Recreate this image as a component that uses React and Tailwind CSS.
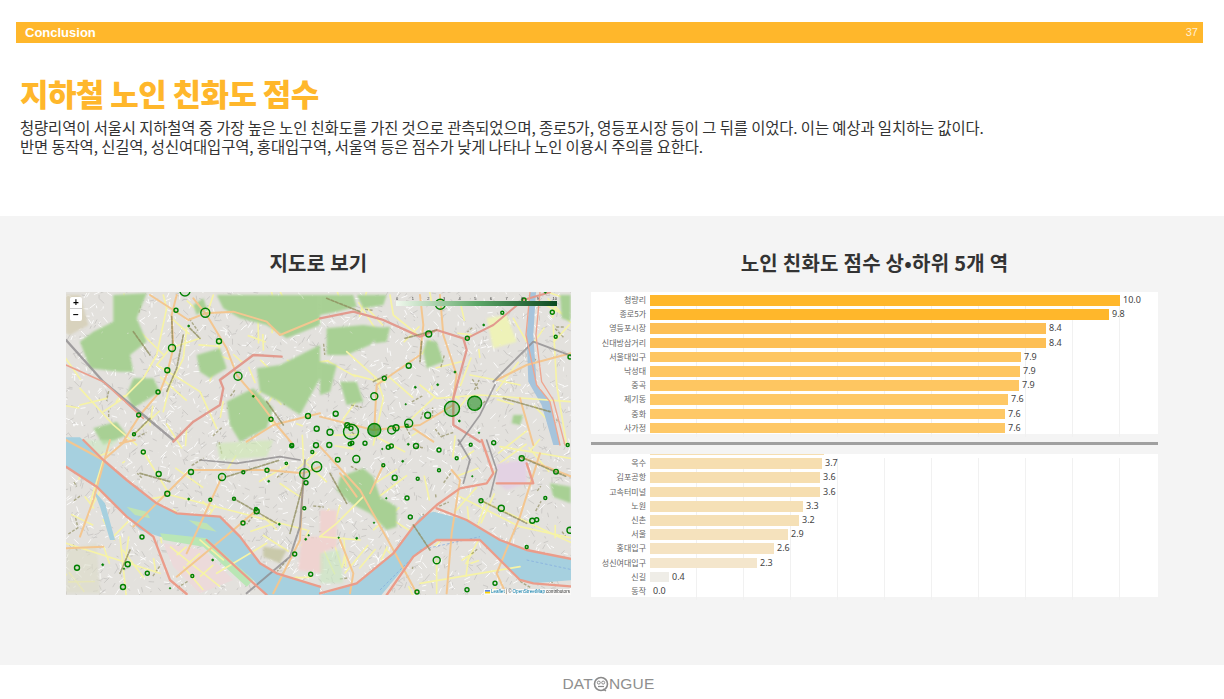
import { Fragment } from 'react';

const top10 = [
  ['청량리', 470, '10.0', '#ffb72b'],
  ['종로5가', 459, '9.8', '#ffb72b'],
  ['영등포시장', 396, '8.4', '#fdbf55'],
  ['신대방삼거리', 396, '8.4', '#fdbf55'],
  ['서울대입구', 371, '7.9', '#fec661'],
  ['낙성대', 370, '7.9', '#fec661'],
  ['중곡', 369, '7.9', '#fec661'],
  ['제기동', 358, '7.6', '#fec866'],
  ['중화', 355, '7.6', '#fec866'],
  ['사가정', 355, '7.6', '#fec866'],
];

const bottom10 = [
  ['옥수', 172, '3.7', '#f6deb0'],
  ['김포공항', 170, '3.6', '#f6deb0'],
  ['고속터미널', 170, '3.6', '#f6deb0'],
  ['노원', 153, '3.3', '#f5e0b6'],
  ['신촌', 149, '3.2', '#f5e0b6'],
  ['서울', 138, '2.9', '#f5e2bd'],
  ['홍대입구', 124, '2.6', '#f5e3c2'],
  ['성신여대입구', 107, '2.3', '#f4e6cc'],
  ['신길', 19, '0.4', '#efede7'],
  ['동작', 0, '0.0', '#ffffff'],
];

// [x, y, r, fillOpacity]
const markers = [
  [119,-1,5],[110,18.3,2],[139.3,20.7,4.5],[122.7,34,1,1],[153,49.3,2.5],[106,56,3.5],[101.3,78.3,2.5],[92,100,2],
  [72.7,123,2],[68,142.3,1.5],[172,84.3,4],[187.3,104.3,1,1],[205,127.3,2],[242,124,2.5],[250.7,136.7,2.5],[226,153,1.5],
  [374.3,12.3,5],[458,8,2],[436.3,20.7,1.5],[417.7,33,1,1],[486.3,20.3,2],[479.3,0.3,1,1],[362.7,42,3],[401.3,46.3,2],
  [489.7,44.7,1.5],[504,65,2],[342.7,73.7,2.5],[318.3,86.3,2],[389,80,1,1],[371.7,92.7,1,1],[349.3,95.3,1,1],[308.3,104.3,3.5],
  [269.7,121.7,2.5],[386,116.7,7.5,0.25],[408.7,111.3,7,0.5],[361.7,123.3,3],[342.7,131.3,4],[340.7,133.7,1.5],[393.3,129,1,1],
  [264,140.3,3],[285,139.7,7.5],[281.3,133.3,2.5],[285,136.3,2],[308.3,138,6.5,0.55],[325.7,138,4],[330,135.7,3],[339.7,112.3,0.7,1],[413,140.7,0.7,1],
  [77.3,160,2],[92.7,182,2.5],[125,180,2.5],[156,185,3.5],[177.3,180.3,1.5],[201,178.3,2],[202.7,189.3,1,1],[238.7,181.7,5],
  [240,190.7,2],[250.7,174.7,5],[225.7,153.7,2],[250,153.3,2.5],[246.3,160,1.5],[220.3,171.3,1.2],[101.3,201.7,2.5],[122.7,207,1,1],
  [144.3,207.7,1.5],[168,206.7,1.5],[190,217,1.5],[190.7,219.3,2.5],[213.3,232.3,1,1],[177,231,2],[238.3,216.3,1.5],[242.7,243.3,0.7,1],
  [239.7,247.3,1,1],[228.7,262,2],[244.7,282.3,2],[76,245,2],[36.7,272.7,1,1],[61.7,272.3,2.5],[58,276.7,0.7,1],[81.3,281.3,2],
  [11,275.7,2.5],[57,295,2.5],[126.3,284,1.5],[146.7,268,1,1],[104,296.3,0.7,1],
  [263.3,153,2.5],[284,152,1.8],[286,151,1.8],[299,151.3,2],[350,154,2.5],[373,158,2],[404.7,152.7,1.5],[427.7,150.7,2],[501.7,153,1.5],
  [325.3,154,2],[322.3,155.3,2],[316.3,157,0.7,1],[342.3,152.3,1,1],[271.7,167.7,2.3],[290.3,167,3.5],[317.3,173.3,1.5],[336.7,169.3,1,1],
  [373,178.3,1.5],[390.7,166.3,1.5],[455.7,166.3,2.5],[490,179.7,2.3],[328.7,185.7,2.5],[351.7,186.7,1.5],[406.3,184.3,0.7,1],[341,206,2],
  [320.3,206.3,0.7,1],[415,208.7,2],[479.3,206,1.5],[435.3,216.3,3],[344.3,225,2],[466.3,228.7,2.5],[470.7,227.7,2],[504,238.3,3],
  [308,230.7,0.7,1],[290.7,246.3,1,1],[272.7,245.7,0.7,1],[460.7,255,1.5],[370.7,268.3,3.5],[429,291.3,2],[401,297.7,2],[351,300,2],
];

// left half above the river, coordinates are 3x
const parksA = [
  'M160 30L260 25 230 100 260 170 210 210 220 260 180 260 90 250 60 170 100 140 160 110Z',
  'M470 30L780 30 780 120 680 160 620 120 540 100 490 70Z',
  'M410 210L480 190 500 250 450 280 420 260Z',
  'M500 350L580 310 640 370 620 430 540 470 510 420Z',
  'M590 250L660 240 780 180 780 280 720 390 660 350 600 320Z',
  'M220 280L280 280 300 320 220 370 200 330Z',
  'M100 430L170 410 200 450 130 480Z',
  'M400 60L430 40 440 70 410 90Z',
];
const parksB = [
  'M0 30L100 30 110 65 50 80 0 90Z',
  'M20 130L130 120 200 130 150 180 80 210 20 210Z',
  'M320 165L350 170 370 230 320 250 310 200Z',
  'M60 290L110 290 130 350 80 360Z',
  'M720 30L752 30 752 110 725 100Z',
  'M0 230L50 240 30 320 0 330Z',
  'M580 390L610 390 600 420 575 415Z',
  'M110 30L200 30 190 60 130 70Z',
  'M160 130L210 125 200 170 165 175Z',
];

function seeded(n, seed, span) {
  // small fixed generator so the street texture does not change between loads
  let s = seed;
  const next = () => {
    s = (s * 16807) % 2147483647;
    return s / 2147483647;
  };
  return Array.from({ length: n }, () => [next() * 505, next() * 303, next() * span - span / 2, next() * span - span / 2, next()]);
}

const streets = seeded(3200, 91, 12);
const parkFlecks = seeded(260, 17, 6);
const yellowRoads = seeded(150, 4711, 60);
const olive = seeded(70, 2027, 24);

function SeoulMap() {
  return (
    <svg viewBox="0 0 505 303" className="block w-[505px] h-[303px]">
      <defs>
        <filter id="soft"><feGaussianBlur stdDeviation="0.4" /></filter>
        <filter id="softer"><feGaussianBlur stdDeviation="1" /></filter>
      </defs>
      <rect width="505" height="303" fill="#e3e1dd" />
      <g filter="url(#soft)">
        {streets.map(([x, y, dx, dy, k], i) => (
          <path key={i} d={`M${x} ${y}l${dx} ${dy}`} stroke={k > 0.5 ? '#c9c7c4' : '#ffffff'} strokeWidth={1} opacity={0.85} />
        ))}
        {yellowRoads.map(([x, y, dx, dy], i) => (
          <path key={i} d={`M${x} ${y}l${dx} ${dy}`} stroke="#f6f3a6" strokeWidth={1.6} />
        ))}
        {olive.map(([x, y, dx, dy], i) => (
          <path key={i} d={`M${x} ${y}l${dx} ${dy}`} stroke="#8d8a5a" strokeWidth={1.4} strokeDasharray="3 1.5" opacity={0.65} />
        ))}

        <g filter="url(#softer)">
          {/* north half */}
          <g transform="translate(-6 -7) scale(.3333)">
            <path d="M18 30L60 30 85 120 30 150 18 145Z" fill="#d8d2bd" />
            {parksA.map((d, i) => <path key={i} d={d} fill="#a8d094" />)}
          </g>
          <g transform="translate(254 -7) scale(.3333)">
            {parksB.map((d, i) => <path key={i} d={d} fill="#a8d094" />)}
            <path d="M500 100L560 90 590 170 520 190Z" fill="#eef2b8" />
          </g>
          {/* south half */}
          <g transform="translate(-6 148) scale(.3333)">
            <path d="M0 0L180 0 100 60 20 60Z" fill="#c8ecc0" opacity=".5" />
            <path d="M470 10L640 0 620 50 480 60Z" fill="#cdeab0" opacity=".6" />
            <path d="M610 320L680 330 660 370 610 350Z" fill="#c9c9aa" />
            <path d="M725 290L790 290 790 400 715 390Z" fill="#efd3d0" />
            <path d="M20 330L110 310 120 460 18 460Z" fill="#dcdcc8" opacity=".6" />
          </g>
          <g transform="translate(254 148) scale(.3333)">
            <path d="M60 110L130 85 160 110 180 170 230 200 230 260 200 270 150 220 90 190 50 150Z" fill="#a8d094" />
            <path d="M690 130L752 140 752 190 700 170Z" fill="#a8d094" />
            <path d="M0 210L50 210 50 320 0 340Z" fill="#efd3d0" />
            <path d="M530 70L620 60 620 130 560 150 530 130Z" fill="#e3d2e3" />
            <path d="M0 340L60 330 70 430 0 430Z" fill="#c8e8c0" opacity=".6" />
          </g>
        </g>
        {parkFlecks.map(([x, y, dx, dy], i) => (
          <path key={i} d={`M${x} ${y}l${dx} ${dy}`} stroke="#ecebe6" strokeWidth={1} opacity={0.5} />
        ))}

        {/* river */}
        <g transform="translate(-6 148) scale(.3333)">
          <path
            d="M18 85L18 -8 60 -8 130 60 200 120 290 190 350 220 480 230 540 290 600 370 650 400 780 440 780 470 620 465 580 420 440 300 300 290 240 270 110 140Z"
            fill="#a6d0df"
          />
          <path d="M100 150L135 190 165 300 150 300 120 200Z" fill="#a6d0df" />
          <path d="M200 200L260 215 270 235 225 225Z" fill="#bfe3b4" />
          <path d="M385 240L440 250 470 275 420 265Z" fill="#bfe3b4" />
          <path d="M300 280L440 295 580 420 560 440 430 320 310 300Z" fill="#b9e6b5" />
          <path d="M310 310L430 330 520 420 420 460 340 380Z" fill="#ecdada" />
          <path d="M350 345L380 320M380 375L420 340M420 410L460 375M330 320L480 440M370 380L430 450" stroke="#f6f3a6" strokeWidth="5" />
        </g>
        <g transform="translate(254 148) scale(.3333)">
          <path
            d="M0 465L110 430 220 340 300 230 340 215 440 240 540 300 620 330 760 360 760 420 640 430 600 420 540 360 480 300 350 300 280 350 180 470Z"
            fill="#a6d0df"
          />
          <path d="M180 450L300 330 480 290M620 360L760 390" fill="none" stroke="#7fa8e0" strokeWidth="2" strokeDasharray="8 6" />
        </g>
        <g transform="translate(254 -7) scale(.3333)">
          <path d="M648 22L640 150 650 300 690 350 720 480 700 480 665 360 625 290 620 150 630 22Z" fill="#a6c4dc" />
        </g>

        {/* roads */}
        <g fill="none" strokeLinecap="round" strokeLinejoin="round">
          <g transform="translate(-6 -7) scale(.3333)" >
            <g stroke="#f6f3a6" strokeWidth="5">
              <path d="M310 30L320 70 290 210 250 280 190 340 130 380" />
              <path d="M420 160L330 190 290 240 340 270 420 320 470 430" />
              <path d="M60 310L160 420 230 480" />
              <path d="M380 130L370 220 330 300 310 380" />
              <path d="M140 340L60 360" />
              <path d="M460 30L440 90" />
            </g>
            <g stroke="#f3c690" strokeWidth="6">
              <path d="M270 30L340 75 385 105 436 85 520 80 620 110 660 150 780 100" />
              <path d="M350 30L335 90 340 190 320 270 300 320 240 390 190 470" />
              <path d="M400 40L440 90 500 190 530 270 590 340 650 420 700 480" />
              <path d="M560 470L640 420 780 385" />
            </g>
            <path d="M18 165L130 290 250 390 340 465" stroke="#8e8c8e" strokeWidth="7" opacity=".8" />
            <path d="M18 240L130 290 250 400" stroke="#eaa08f" strokeWidth="5" />
            <path d="M340 470L400 410 480 360 490 310 480 285 580 210 665 215" stroke="#e29a8e" strokeWidth="7" />
            <g stroke="#8d8a5a" strokeWidth="5" strokeDasharray="9 5" opacity=".75">
              <path d="M335 95L338 180" />
              <path d="M370 150L350 250 320 320" />
              <path d="M220 140L270 210" />
              <path d="M390 130L420 160" />
              <path d="M270 400L220 450" />
              <path d="M620 350L670 420" />
            </g>
          </g>
          <g transform="translate(254 -7) scale(.3333)">
            <g stroke="#f6f3a6" strokeWidth="5">
              <path d="M210 30L220 90 300 155" />
              <path d="M80 200L170 280 190 340 160 480" />
              <path d="M300 300L350 340 480 330 750 350" />
              <path d="M450 270L530 285 600 300" />
              <path d="M700 120L710 300 740 480" />
              <path d="M580 100L620 170" />
            </g>
            <g stroke="#f3c690" strokeWidth="6">
              <path d="M300 30L310 120 300 210 170 300 163 430" />
              <path d="M360 30L370 150 410 270 400 340" />
              <path d="M0 395L160 435 300 420 400 360" />
              <path d="M280 430L340 470" />
              <path d="M530 285L620 240 752 205" />
              <path d="M600 340L640 480" />
            </g>
            <path d="M520 290L640 170 752 212" stroke="#8e8c8e" strokeWidth="6" opacity=".8" />
            <path d="M0 100L100 80 190 105 300 155 350 135 430 160 440 195 400 340 400 420 480 470" stroke="#e29a8e" strokeWidth="7" />
            <path d="M440 160L520 120 610 45 690 22" stroke="#e29a8e" strokeWidth="6" />
            <path d="M630 22L618 150 650 300 690 350 720 480" stroke="#eea58f" strokeWidth="4" />
            <path d="M660 22L648 150 665 290 700 345 735 480" stroke="#eea58f" strokeWidth="4" />
            <path d="M415 480L480 390 525 300" stroke="#8e8c8e" strokeWidth="5" opacity=".8" />
            <g stroke="#8d8a5a" strokeWidth="5" strokeDasharray="9 5" opacity=".75">
              <path d="M305 170L300 230" />
              <path d="M20 40L120 80" />
              <path d="M550 340L690 380" />
              <path d="M160 290L200 270" />
              <path d="M255 160L350 135" />
            </g>
          </g>
          <g transform="translate(-6 148) scale(.3333)">
            <g stroke="#f6f3a6" strokeWidth="5">
              <path d="M250 36L330 165 390 180 740 270" />
              <path d="M130 60L90 190" />
              <path d="M18 310L300 400" />
              <path d="M180 290L200 480" />
              <path d="M420 300L490 360" />
              <path d="M470 400L620 310" />
            </g>
            <g stroke="#f3c690" strokeWidth="6">
              <path d="M150 0L100 180 60 290" />
              <path d="M400 90L620 90 730 100 780 80" />
              <path d="M180 10L225 0" />
              <path d="M390 90L320 160 220 260" />
              <path d="M486 110L440 210 380 340" />
              <path d="M730 100L720 300 640 460" />
              <path d="M18 0L130 60 200 0" />
              <path d="M18 325L130 320" />
              <path d="M590 210L520 270 350 410" />
            </g>
            <path d="M420 60L530 70 660 50 720 60" stroke="#8e8c8e" strokeWidth="5" opacity=".8" />
            <path d="M735 60L720 260 690 350 560 460" stroke="#8e8c8e" strokeWidth="6" opacity=".8" />
            <g stroke="#eb9c8a" strokeWidth="7">
              <path d="M18 80L110 140 200 230 280 290 330 420 380 462" />
              <path d="M70 0L130 60 200 120 290 190 350 220 480 230 540 290 600 370 650 400 780 440" />
              <path d="M440 300L570 420 620 465" />
            </g>
            <g stroke="#8d8a5a" strokeWidth="5" strokeDasharray="9 5" opacity=".75">
              <path d="M500 110L660 60" />
              <path d="M240 100L330 125" />
              <path d="M520 175L650 250" />
              <path d="M210 330L180 400" />
              <path d="M730 130L690 280" />
            </g>
          </g>
          <g transform="translate(254 148) scale(.3333)">
            <g stroke="#f6f3a6" strokeWidth="5">
              <path d="M480 180L780 320" />
              <path d="M350 360L350 460" />
              <path d="M130 170L50 250 0 290" />
              <path d="M540 20L780 60" />
              <path d="M0 290L120 300" />
              <path d="M420 170L600 260 780 300" />
              <path d="M300 430L600 380" />
            </g>
            <g stroke="#f3c690" strokeWidth="6">
              <path d="M0 20L120 150 220 330 290 460" />
              <path d="M60 100L110 170" />
              <path d="M395 90L420 120 395 280 380 460" />
              <path d="M660 40L600 230 530 400 560 465" />
              <path d="M600 50L780 120" />
              <path d="M60 300L100 400 90 460" />
              <path d="M190 75L150 160" />
            </g>
            <path d="M415 0L450 60 430 130" stroke="#8e8c8e" strokeWidth="5" opacity=".8" />
            <path d="M500 0L530 90 510 170" stroke="#8e8c8e" strokeWidth="5" opacity=".8" />
            <g stroke="#eb9c8a" strokeWidth="7">
              <path d="M485 0L520 100 500 130 420 145 350 195 280 260 220 340 110 430 0 460" />
              <path d="M350 205L440 240 540 300 620 330 770 360" />
              <path d="M200 465L280 350 350 300 480 300 540 360 600 420 640 430 760 440" />
              <path d="M530 130L640 130 620 70" />
            </g>
            <g stroke="#8d8a5a" strokeWidth="5" strokeDasharray="9 5" opacity=".75">
              <path d="M480 180L620 250" />
              <path d="M280 255L330 330" />
              <path d="M600 50L740 110" />
              <path d="M30 100L80 190" />
            </g>
          </g>
        </g>
      </g>

      {markers.map(([x, y, r, fill], i) => (
        <circle key={i} cx={x} cy={y} r={r} stroke="#008000" strokeWidth={r < 1.2 ? 0.7 : 1.4} fill="#008000" fillOpacity={fill || 0.05} />
      ))}
    </svg>
  );
}

function BarChart({ rows, sliver }) {
  return (
    <div className={`bg-white w-[567px] flex flex-col ${sliver ? 'h-[143px]' : 'h-[142px] pt-[3px]'}`}>
      {sliver && (
        <div className="flex h-[4.3px] shrink-0">
          <div className="w-[59px]" />
          <div className="h-[1px] w-[174px] bg-[#f6deb0]" />
        </div>
      )}
      {rows.map(([name, width, value, color]) => (
        <Fragment key={name}>
          <div className="flex h-[14.2px] shrink-0 items-start">
            <div className="w-[59px] pr-[4px] text-right text-[8px] leading-[10.7px] text-[#666] font-['Noto_Sans_CJK_KR',sans-serif]">{name}</div>
            <div className="flex-1 h-[14.2px] flex items-start bg-[repeating-linear-gradient(to_right,transparent_0,transparent_46px,#f1f1f1_46px,#f1f1f1_47px)]">
              <div className="h-[10.7px]" style={{ width, backgroundColor: color }} />
              <span className="ml-[3px] text-[9px] leading-[10.7px] text-[#444] font-['Noto_Sans',sans-serif]">{value}</span>
            </div>
          </div>
        </Fragment>
      ))}
    </div>
  );
}

export default function App() {
  return (
    <div className="w-[1224px] h-[699px] overflow-hidden bg-white font-['Noto_Sans_CJK_KR',sans-serif] flex flex-col">
      <div className="h-[216px] shrink-0 pt-[22px]">
        <div className="ml-[16px] mr-[21px] h-[21px] bg-[#ffb72b] pl-[9px] pr-[5px] flex items-center justify-between text-white font-['Liberation_Sans',sans-serif]">
          <span className="text-[13px] font-bold">Conclusion</span>
          <span className="text-[11px] opacity-80">37</span>
        </div>
        <h1 className="mt-[32px] ml-[20px] text-[31px] leading-[36px] font-black text-[#ffb72b] tracking-[-0.6px]">지하철 노인 친화도 점수</h1>
        <div className="ml-[20px] mt-[7px] text-[15.4px] leading-[19px] text-[#333] tracking-[-0.1px]">
          <p>청량리역이 서울시 지하철역 중 가장 높은 노인 친화도를 가진 것으로 관측되었으며, 종로5가, 영등포시장 등이 그 뒤를 이었다. 이는 예상과 일치하는 값이다.</p>
          <p>반면 동작역, 신길역, 성신여대입구역, 홍대입구역, 서울역 등은 점수가 낮게 나타나 노인 이용시 주의를 요한다.</p>
        </div>
      </div>

      <div className="h-[449px] shrink-0 bg-[#f4f4f4] pl-[66px] pt-[31px] flex gap-[20px]">
        <div className="w-[505px]">
          <h2 className="h-[45px] text-center text-[20px] leading-[32px] font-bold text-[#333] tracking-[0.25px]">지도로 보기</h2>
          <div className="relative w-[505px] h-[303px] overflow-hidden">
            <SeoulMap />
            <div className="absolute left-[4px] top-[5px] w-[12px] h-[24px] bg-white rounded-[2px] flex flex-col text-center font-['Liberation_Sans',sans-serif] font-bold text-[10px] leading-[12px] text-black">
              <span className="h-[12px] border-b border-[#ccc]">+</span>
              <span className="h-[12px]">−</span>
            </div>
            <div className="absolute left-[330px] top-[4px] w-[161px]">
              <div className="flex justify-between text-[4px] leading-[5px] text-[#333] font-['Liberation_Sans',sans-serif]">
                {[0, 1, 2, 3, 4, 5, 6, 7, 8, 9, 10].map((n) => <span key={n}>{n}</span>)}
              </div>
              <div className="h-[5px] bg-gradient-to-r from-[#f2f9ef] via-[#5da868] to-[#0c4a22]" />
            </div>
            <div className="absolute right-0 bottom-0 h-[6px] px-[1px] bg-white/80 text-[4.6px] leading-[6px] text-[#333] font-['Liberation_Sans',sans-serif] whitespace-nowrap flex items-center gap-[1px]">
              <svg viewBox="0 0 6 4" className="w-[5px] h-[3.5px]"><rect width="6" height="2" fill="#4c7be1" /><rect y="2" width="6" height="2" fill="#ffd500" /></svg>
              <span className="text-[#0078a8]">Leaflet</span> | © <span className="text-[#0078a8]">OpenStreetMap</span> contributors
            </div>
          </div>
        </div>
        <div className="w-[567px]">
          <h2 className="h-[45px] text-center text-[20px] leading-[32px] font-bold text-[#333] tracking-[0.25px]">노인 친화도 점수 상•하위 5개 역</h2>
          <BarChart rows={top10} />
          <div className="mt-[8px] mb-[9px] h-[3px] bg-[#a0a0a0]" />
          <BarChart rows={bottom10} sliver />
        </div>
      </div>

      <div className="flex-1 flex items-center justify-center pt-[4px] pr-[7px] text-[15.5px] text-[#8f8f8f] font-['Liberation_Sans',sans-serif] tracking-[0.2px]">
        <span>DAT</span>
        <svg viewBox="0 0 16 16" className="w-[16px] h-[16px]" fill="none" stroke="#8a8a8a">
          <circle cx="8" cy="8" r="6.5" strokeWidth="1.6" />
          <circle cx="5.8" cy="6.6" r="1.5" strokeWidth="1" />
          <circle cx="10.2" cy="6.6" r="1.5" strokeWidth="1" />
          <path d="M5 10.5h6" strokeWidth="1.2" />
          <path d="M10 13l3 2" strokeWidth="1.4" />
        </svg>
        <span>NGUE</span>
      </div>
    </div>
  );
}
